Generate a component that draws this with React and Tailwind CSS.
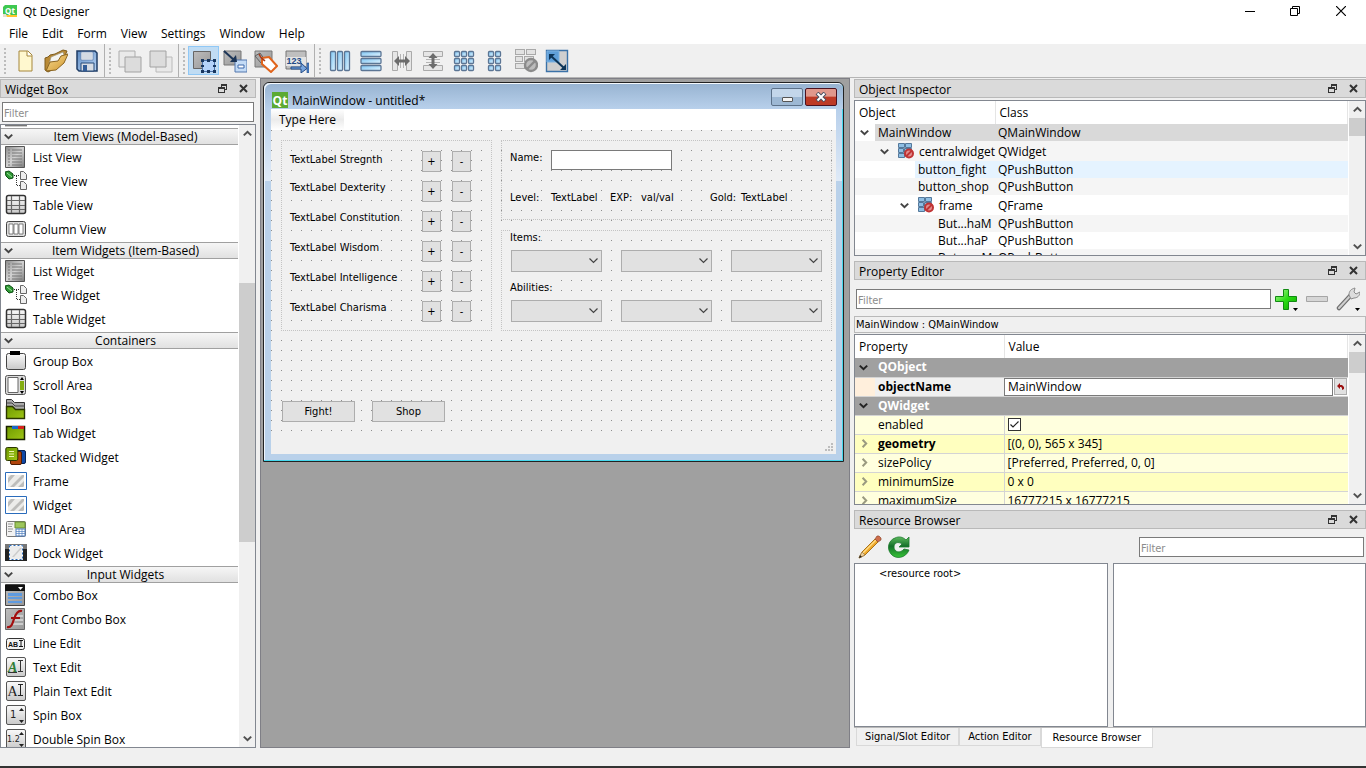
import { useState } from "react";

const ui = "font-['Open_Sans','Noto_Sans',sans-serif] text-[12px] leading-4";
const small = "font-['DejaVu_Sans_Condensed','DejaVu_Sans',sans-serif] text-[11px] leading-4";

/* ---------- small glyphs ---------- */

function Chevron({ dir = "down", color = "#505050", size = 9 }) {
  const turn = { down: 0, up: 180, right: -90 }[dir];
  return (
    <svg width={size} height={size} viewBox="0 0 9 9" className="shrink-0">
      <path d="M.8 2.6 4.5 6.2 8.2 2.6" transform={`rotate(${turn} 4.5 4.5)`} fill="none" stroke={color} strokeWidth="2" />
    </svg>
  );
}

function RestoreGlyph() {
  return (
    <svg width="9" height="9" viewBox="0 0 9 9" shapeRendering="crispEdges">
      <path d="M3 0h6v6H7V5h1V2H4v1H3zM0 3h7v6H0zM1 5v3h5V5z" fill="#333" fillRule="evenodd" />
    </svg>
  );
}

function CloseGlyph() {
  return (
    <svg width="9" height="9" viewBox="0 0 9 9">
      <path d="M1 1l7 7M8 1 1 8" stroke="#333" strokeWidth="2" />
    </svg>
  );
}

function DropMark() {
  return (
    <svg width="5" height="3" viewBox="0 0 5 3" className="absolute right-0 bottom-0">
      <path d="M0 0h5L2.500 3z" fill="#000" />
    </svg>
  );
}

function Gradients() {
  return (
    <svg width="0" height="0" className="absolute" aria-hidden="true">
      <defs>
        <linearGradient id="metal" x1="0" y1="0" x2="1" y2="1">
          <stop offset="0" stopColor="#8a8a8a" />
          <stop offset=".5" stopColor="#d2d2d2" />
          <stop offset="1" stopColor="#7c7c7c" />
        </linearGradient>
        <linearGradient id="plate" x1="0" y1="0" x2="0" y2="1">
          <stop offset="0" stopColor="#fafafa" />
          <stop offset="1" stopColor="#c9c9c9" />
        </linearGradient>
        <linearGradient id="steel" x1="0" y1="0" x2="1" y2="1">
          <stop offset="0" stopColor="#bdbdbd" />
          <stop offset="1" stopColor="#989898" />
        </linearGradient>
        <linearGradient id="sky" x1="0" y1="0" x2="1" y2="1">
          <stop offset="0" stopColor="#7cc4f2" />
          <stop offset="1" stopColor="#e2f4ff" />
        </linearGradient>
        <linearGradient id="lime" x1="0" y1="0" x2="1" y2="1">
          <stop offset="0" stopColor="#6f9a00" />
          <stop offset="1" stopColor="#9fc515" />
        </linearGradient>
        <linearGradient id="gold" x1="0" y1="0" x2="1" y2="1">
          <stop offset="0" stopColor="#f8dc94" />
          <stop offset="1" stopColor="#cf952b" />
        </linearGradient>
        <linearGradient id="leaf" x1="0" y1="0" x2="0" y2="1">
          <stop offset="0" stopColor="#5cb85c" />
          <stop offset=".45" stopColor="#15702a" />
          <stop offset="1" stopColor="#37c437" />
        </linearGradient>
        <linearGradient id="green" x1="0" y1="0" x2="1" y2="1">
          <stop offset="0" stopColor="#b6f7a0" />
          <stop offset=".5" stopColor="#2bdc14" />
          <stop offset="1" stopColor="#0da800" />
        </linearGradient>
        <linearGradient id="navy" x1="0" y1="0" x2="1" y2="1">
          <stop offset="0" stopColor="#5f8dc4" />
          <stop offset="1" stopColor="#b9d4f4" />
        </linearGradient>
      </defs>
    </svg>
  );
}

function QtLogo({ size = 16 }) {
  return (
    <svg width={size} height={size} viewBox="0 0 16 16">
      <path d="M0 0h16v16H0z" fill="#5caa33" />
      <text x="8" y="12.500" textAnchor="middle" fontSize="12" fontWeight="700" fill="#fff" fontFamily="Open Sans, sans-serif">Qt</text>
    </svg>
  );
}

function AppLogo() {
  return (
    <svg width="14" height="13" viewBox="0 0 14 13">
      <path d="M2 0h12v10l-2 2H0V2z" fill="#3fc850" />
      <text x="7" y="8.500" textAnchor="middle" fontSize="8" fontWeight="700" fill="#fff" fontFamily="Open Sans, sans-serif">Qt</text>
      <path d="M2 10h12v2H2z" fill="#ffc52e" />
      <path d="M0 9h3l1 3H0z" fill="#e8e0cc" />
    </svg>
  );
}

/* ---------- toolbar icons, drawn on a 24px box ---------- */

function Icon24({ children }) {
  return (
    <svg width="24" height="24" viewBox="0 0 24 24">
      {children}
    </svg>
  );
}

const toolIcons = {
  new: (
    <Icon24>
      <path d="M6 2h9l4 4v16H6z" fill="#fff8cf" stroke="#a5863a" />
      <path d="M14 2v5h5" fill="#fff" stroke="#a5863a" />
    </Icon24>
  ),
  open: (
    <Icon24>
      <path d="M1 21V9l3-1 2-2 5-1 8-4 4 1-3 7-6 9-10 5z" fill="#b98a35" stroke="#7e5c1e" />
      <path d="m4 19 3-11 12-5 1 3-4 6z" fill="#f4f4f0" stroke="#999178" strokeWidth=".7" />
      <path d="m2 22 4-9 8-1 3-5 7-2-4 9-8 7z" fill="url(#gold)" stroke="#8b6521" />
    </Icon24>
  ),
  save: (
    <Icon24>
      <path d="M2 2h18l2 2v18H4l-2-2z" fill="url(#navy)" stroke="#1f3d66" strokeWidth="1.500" />
      <path d="M6 3h12v8H6z" fill="#f4f7fb" stroke="#5b7aa5" strokeWidth=".7" />
      <path d="M7 5h10M7 7h10M7 9h10" stroke="#b3bdca" />
      <path d="M6 14h13v8H6z" fill="#d8dde4" stroke="#274a78" />
      <path d="M8 16h4v6H8z" fill="#335d97" />
    </Icon24>
  ),
  back: (
    <Icon24>
      <path d="M1 2h16v16H1z" fill="#e9e9e9" stroke="#adadad" />
      <path d="M7 8h16v15H7z" fill="#dcdcdc" stroke="#a2a2a2" />
    </Icon24>
  ),
  front: (
    <Icon24>
      <path d="M7 8h16v15H7z" fill="#e9e9e9" stroke="#bababa" />
      <path d="M1 2h16v16H1z" fill="#dcdcdc" stroke="#a2a2a2" />
    </Icon24>
  ),
  widgets: (
    <Icon24>
      <path d="M1.500 2.500h17v17h-17z" fill="url(#steel)" stroke="#666" />
      <path d="M10.500 11.500h12v11h-12z" fill="#b4d3fa" stroke="#4c72a8" />
      <path d="M9 10h3v3H9zM15 10h3v3h-3zM21 10h3v3h-3zM9 16h3v2H9zM21 16h3v2h-3zM9 21h3v3H9zM15 21h3v3h-3zM21 21h3v3h-3z" fill="#17365f" />
    </Icon24>
  ),
  signals: (
    <Icon24>
      <path d="M1 2h17v14H1z" fill="url(#steel)" stroke="#777" />
      <path d="M12 11h12v12H12z" fill="#c3dbf6" stroke="#5277ad" />
      <path d="M15 16h6v3h-6z" fill="#fff" stroke="#3d68aa" />
      <path d="m1 2 10 9" stroke="#1c3557" strokeWidth="2" />
      <path d="M14 13H7l6-7z" fill="#1c3557" />
    </Icon24>
  ),
  buddies: (
    <Icon24>
      <path d="M1 2h17v16H1z" fill="url(#steel)" stroke="#777" />
      <path d="m1 7 5-3 5 7-4 3z" fill="#a8a8a8" stroke="#606060" />
      <path d="m8 9 7-1 8 9-6 6-9-8z" fill="#fff" stroke="#e0641c" strokeWidth="2" />
      <path d="M5 5c2 5 4 5 6 7" fill="none" stroke="#a63a1b" strokeWidth="1.500" />
    </Icon24>
  ),
  taborder: (
    <Icon24>
      <path d="M1 2h20v18H1z" fill="#bfbfbf" stroke="#777" />
      <path d="M1 8h20v9H1z" fill="#e4e4e4" />
      <text x="1.500" y="15" fontSize="9" fontWeight="700" fill="#234a86" fontFamily="Liberation Sans, sans-serif">123</text>
      <path d="M6 18h10v-4l6 5.500-6 4.500v-4H6z" fill="#77a5dd" stroke="#234a86" />
      <path d="M22 14h2v10h-2z" fill="#4d82c6" stroke="#234a86" strokeWidth=".6" />
    </Icon24>
  ),
  hlayout: (
    <Icon24>
      {[2, 9, 16].map((x) => (
        <rect key={x} x={x + 0.5} y="2.500" width="5" height="19" rx="1" fill="url(#sky)" stroke="#5b7594" strokeWidth="1.300" />
      ))}
    </Icon24>
  ),
  vlayout: (
    <Icon24>
      {[2, 9, 16].map((y) => (
        <rect key={y} x="2" y={y + 0.5} width="20" height="5" rx="1" fill="url(#sky)" stroke="#5b7594" strokeWidth="1.300" />
      ))}
    </Icon24>
  ),
  hsplit: (
    <Icon24>
      <path d="M2.500 2.500h5v19h-5zM16.500 2.500h5v19h-5z" fill="#e6e6e6" stroke="#aaa" />
      <path d="M10.500 5v14M13.500 5v14" stroke="#b4b4b4" />
      <path d="m4 12 5-5v3.500h6V7l5 5-5 5v-3.500H9V17z" fill="#6c6c6c" />
    </Icon24>
  ),
  vsplit: (
    <Icon24>
      <path d="M2.500 2.500h19v5h-19zM2.500 16.500h19v5h-19z" fill="#e6e6e6" stroke="#aaa" />
      <path d="M5 10.500h14M5 13.500h14" stroke="#b4b4b4" />
      <path d="m12 4 4.500 5h-3v6h3L12 20l-4.500-5h3V9h-3z" fill="#6c6c6c" />
    </Icon24>
  ),
  grid: (
    <Icon24>
      {[2, 9, 16].map((y) =>
        [2, 9, 16].map((x) => (
          <rect key={`${x}-${y}`} x={x + 0.5} y={y + 0.5} width="5" height="5" rx="1" fill="url(#sky)" stroke="#5b7594" strokeWidth="1.300" />
        ))
      )}
    </Icon24>
  ),
  form: (
    <Icon24>
      {[2, 9, 16].map((y) =>
        [5, 12].map((x) => (
          <rect key={`${x}-${y}`} x={x + 0.5} y={y + 0.5} width="5" height="5" rx="1" fill="url(#sky)" stroke="#5b7594" strokeWidth="1.300" />
        ))
      )}
    </Icon24>
  ),
  breaklayout: (
    <Icon24>
      {[0, 7, 14].map((y, i) => (
        <g key={y} fill="#e2e2e2" stroke="#a9a9a9">
          <rect x="1.500" y={y + 0.5} width={i === 1 ? 7 : 9} height="5" />
          <rect x={i === 1 ? 10.5 : 12.5} y={y + 0.5} width="9" height="5" />
        </g>
      ))}
      <circle cx="17" cy="16" r="6" fill="#bdbdbd" stroke="#8b8b8b" strokeWidth="2.400" />
      <path d="m13 20 8-8" stroke="#8b8b8b" strokeWidth="2.400" />
    </Icon24>
  ),
  adjust: (
    <Icon24>
      <path d="M1.500 1.500h21v21h-21z" fill="#cfcfcf" stroke="#3b72a8" strokeWidth="1.400" />
      <path d="M2 2h12v11H2z" fill="#5f9fd9" stroke="#7eb3e2" />
      <path d="m6 7 13 12" stroke="#0d3558" strokeWidth="2" />
      <path d="M4 5h6l-6 6zM21 21h-6l6-6z" fill="#0d3558" />
    </Icon24>
  ),
};

const toolGroups = [
  [["new", "New"], ["open", "Open"], ["save", "Save"]],
  [["back", "Send to Back"], ["front", "Bring to Front"]],
  [["widgets", "Edit Widgets"], ["signals", "Edit Signals/Slots"], ["buddies", "Edit Buddies"], ["taborder", "Edit Tab Order"]],
  [
    ["hlayout", "Lay Out Horizontally"],
    ["vlayout", "Lay Out Vertically"],
    ["hsplit", "Lay Out Horizontally in Splitter"],
    ["vsplit", "Lay Out Vertically in Splitter"],
    ["grid", "Lay Out in a Grid"],
    ["form", "Lay Out in a Form Layout"],
    ["breaklayout", "Break Layout"],
    ["adjust", "Adjust Size"],
  ],
];

/* ---------- widget box icons, drawn on a 22px box ---------- */

function Icon22({ children }) {
  return (
    <svg width="22" height="22" viewBox="0 0 22 22" className="shrink-0">
      {children}
    </svg>
  );
}

const editPlate = <rect x="1.500" y="1.500" width="19" height="19" rx="1.500" fill="url(#plate)" stroke="#555" />;
const stripes = (
  <>
    <path d="M.5 2.500h21v17H.5z" fill="#fff" stroke="#2a6cbc" />
    <path d="M3 5h16v12H3z" fill="#ececea" />
    <path d="M3 13v-5l3-3h4zM5 17 17 5h2v2L9 17zM13 17l6-6v5l-1 1z" fill="#bdbdbb" />
  </>
);

const widgetIcons = {
  list: (
    <Icon22>
      <path d="M.5.5h19v21H.5z" fill="url(#metal)" stroke="#555" />
      <path d="M3 4h2M7 4h10M3 7h2M7 7h10M3 10h2M7 10h10M3 13h2M7 13h10M3 16h2M7 16h10M3 19h2M7 19h10" stroke="#777" />
    </Icon22>
  ),
  tree: (
    <Icon22>
      <path d="M0 2l4-1 4 3v4l-4 1-3-3z" fill="#2f9a35" stroke="#0c4d12" />
      <path d="m2 3 5 4" stroke="#9be29b" />
      <path d="M9 5.500h6M11.500 6v10M12 15.500h4" stroke="#333" strokeDasharray="1 1" fill="none" />
      <path d="M15.500 1.500h3l3 3v5h-6zM15.500 11.500h3l3 3v5h-6z" fill="#eee" stroke="#666" />
    </Icon22>
  ),
  table: (
    <Icon22>
      <rect x="1.500" y="1.500" width="19" height="18" rx="2" fill="url(#plate)" stroke="#333" strokeWidth="1.500" />
      <path d="M2 6.500h18M2 11.500h18M2 15.500h18M6.500 2v17M14.500 2v17" stroke="#666" strokeWidth="1.200" />
    </Icon22>
  ),
  column: (
    <Icon22>
      <rect x="1.500" y="3.500" width="19" height="15" rx="2" fill="#ddd" stroke="#444" />
      <path d="M4 6h4v10H4zM9 6h4v10H9zM14 6h4v10h-4z" fill="#fff" stroke="#666" strokeWidth=".8" />
    </Icon22>
  ),
  group: (
    <Icon22>
      <rect x="1.500" y="3.500" width="19" height="16" rx="2" fill="url(#plate)" stroke="#444" />
      <path d="M5 1h10v4H5z" fill="#000" />
    </Icon22>
  ),
  scroll: (
    <Icon22>
      <rect x=".5" y="1.500" width="20" height="19" rx="2" fill="#ddd" stroke="#555" />
      <path d="M3 3.500h10v15H3z" fill="#fff" stroke="#666" />
      <path d="M15 7h4v9h-4z" fill="#84ad10" />
      <path d="m15 6 2-3 2 3zM15 17h4l-2 3z" fill="#000" />
    </Icon22>
  ),
  toolbox: (
    <Icon22>
      <path d="M1.500 1.500h5l3 3h10v16h-18z" fill="#aaa" stroke="#333" />
      <path d="M2 5h5l3 3h10" fill="none" stroke="#444" />
      <path d="M1.500 8.500h6l3 3h9v9h-18z" fill="url(#lime)" stroke="#2a3600" strokeWidth="1.400" />
    </Icon22>
  ),
  tab: (
    <Icon22>
      <path d="M1.500 4.500h18v13h-18z" fill="url(#lime)" stroke="#182000" strokeWidth="1.500" />
      <path d="M7 4h6v3H7z" fill="#1768c9" />
      <path d="M13 4h6v3h-6z" fill="#d5221d" />
    </Icon22>
  ),
  stacked: (
    <Icon22>
      <rect x="9.500" y="4.500" width="11" height="13" rx="1.500" fill="#1148a5" stroke="#082252" />
      <rect x="5.500" y="5.500" width="11" height="13" rx="1.500" fill="#b0440c" stroke="#501c02" />
      <rect x=".8" y="1.500" width="12" height="13" rx="1.500" fill="url(#lime)" stroke="#2a3600" />
      <path d="M4 5.500h5M4 8h5M4 10.500h5" stroke="#eef6b0" />
    </Icon22>
  ),
  frame: <Icon22>{stripes}</Icon22>,
  mdi: (
    <Icon22>
      <rect x="1.500" y="3.500" width="19" height="15" rx="1" fill="#f2f2f2" stroke="#777" />
      <path d="M3 6h5M3 8.500h4M3 11h5M3 13.500h4" stroke="#999" />
      <path d="M10 4h10v6H10z" fill="#9dc65c" stroke="#688f30" />
      <path d="M11 11h9v7h-9z" fill="#fff" stroke="#4f7fc0" />
      <path d="M11 13.500h9M11 15.500h9M14 11v7M17 11v7" stroke="#4f7fc0" strokeWidth=".7" />
    </Icon22>
  ),
  dock: (
    <Icon22>
      <path d="M0 2h22v17H0z" fill="#222" />
      <path d="M0 2h22v5H0z" fill="#777" />
      <path d="M4.500 3.500h13v14h-13z" fill="#ececec" stroke="#fff" />
      <path d="M4.500 3.500h13v14h-13z" fill="none" stroke="#2a6cbc" strokeDasharray="2 2" />
      <path d="m7 15 8-9h2L9 15z" fill="#ccc" />
    </Icon22>
  ),
  combo: (
    <Icon22>
      <path d="M.5.5h19v21H.5z" fill="url(#steel)" stroke="#444" />
      <path d="M0 1h20v6H0z" fill="#111" />
      <path d="M13 3h5l-2.500 3z" fill="#fff" />
      <path d="M3 9h14v3H3zM3 13h14v2H3zM3 17h14v2H3z" fill="#5f9be0" />
    </Icon22>
  ),
  fontcombo: (
    <Icon22>
      <path d="M.5.5h19v21H.5z" fill="url(#steel)" stroke="#666" />
      <path d="M8 8h10M8 12h10M8 16h10" stroke="#ccc" strokeWidth="2" />
      <path d="M2 19c4 1 5-2 7-8s4-9 8-8M6 10h9" fill="none" stroke="#a30f0f" strokeWidth="2.200" />
    </Icon22>
  ),
  line: (
    <Icon22>
      <rect x="1.500" y="6.500" width="18" height="11" rx="2" fill="#f2f2f2" stroke="#333" />
      <text x="3" y="14.500" fontSize="7" fontWeight="700" fill="#111" fontFamily="Liberation Sans, sans-serif">AB</text>
      <path d="M14 8.500h4M14 14.500h4M16 9v5" stroke="#111" />
    </Icon22>
  ),
  text: (
    <Icon22>
      {editPlate}
      <text x="3" y="16" fontSize="14" fontStyle="italic" fontWeight="700" fill="#2f7d36" fontFamily="Liberation Serif, serif">A</text>
      <path d="M3 16.500h9M13 4.500h5M13 15.500h5M15.500 5v10" stroke="#333" />
    </Icon22>
  ),
  plain: (
    <Icon22>
      {editPlate}
      <text x="2.500" y="16" fontSize="14" fill="#222" fontFamily="Liberation Serif, serif">A</text>
      <path d="M13 4.500h5M13 15.500h5M15.500 5v10" stroke="#222" />
    </Icon22>
  ),
  spin: (
    <Icon22>
      {editPlate}
      <text x="5" y="14" fontSize="10" fill="#222" fontFamily="DejaVu Sans, sans-serif">1</text>
      <path d="m14 7 2.500-3L19 7zM14 16h5l-2.500 3z" fill="#222" />
    </Icon22>
  ),
  dspin: (
    <Icon22>
      {editPlate}
      <text x="2" y="14" fontSize="8" fill="#222" fontFamily="DejaVu Sans, sans-serif">1.2</text>
      <path d="m14 7 2.500-3L19 7zM14 16h5l-2.500 3z" fill="#222" />
    </Icon22>
  ),
};

const categories = [
  {
    title: "Item Views (Model-Based)",
    items: [["list", "List View"], ["tree", "Tree View"], ["table", "Table View"], ["column", "Column View"]],
  },
  {
    title: "Item Widgets (Item-Based)",
    items: [["list", "List Widget"], ["tree", "Tree Widget"], ["table", "Table Widget"]],
  },
  {
    title: "Containers",
    items: [
      ["group", "Group Box"],
      ["scroll", "Scroll Area"],
      ["toolbox", "Tool Box"],
      ["tab", "Tab Widget"],
      ["stacked", "Stacked Widget"],
      ["frame", "Frame"],
      ["frame", "Widget"],
      ["mdi", "MDI Area"],
      ["dock", "Dock Widget"],
    ],
  },
  {
    title: "Input Widgets",
    items: [
      ["combo", "Combo Box"],
      ["fontcombo", "Font Combo Box"],
      ["line", "Line Edit"],
      ["text", "Text Edit"],
      ["plain", "Plain Text Edit"],
      ["spin", "Spin Box"],
      ["dspin", "Double Spin Box"],
    ],
  },
];

/* ---------- shared parts ---------- */

function DockTitle({ children }) {
  return (
    <div className="flex h-[19px] shrink-0 items-center border border-[#b9b9b9] bg-[#dadada] pl-1 pr-[7px]">
      <h2 className="flex-1 pt-[2px]">{children}</h2>
      <button type="button" aria-label="Float" className="mr-3">
        <RestoreGlyph />
      </button>
      <button type="button" aria-label="Close">
        <CloseGlyph />
      </button>
    </div>
  );
}

function ScrollBar({ before, thumb }) {
  return (
    <div className="flex w-[17px] shrink-0 flex-col items-center border-l border-white bg-[#f0f0f0]">
      <button type="button" aria-label="Scroll up" className="flex h-[17px] w-full shrink-0 items-center justify-center">
        <Chevron dir="up" />
      </button>
      <div className="flex min-h-0 w-full flex-1 flex-col">
        <div className={before} />
        <div className={`w-full bg-[#cdcdcd] ${thumb}`} />
      </div>
      <button type="button" aria-label="Scroll down" className="flex h-[17px] w-full shrink-0 items-center justify-center">
        <Chevron />
      </button>
    </div>
  );
}

function FilterInput({ label, className }) {
  return (
    <input
      type="text"
      aria-label={label}
      placeholder="Filter"
      className={`h-5 min-w-0 border border-[#7a7a7a] bg-white px-px pt-[2px] outline-none placeholder:text-[#8c8c8c] ${small} ${className}`}
    />
  );
}

/* ---------- top bars ---------- */

function TitleBar() {
  return (
    <header className="flex h-[22px] shrink-0 items-center bg-white pl-[3px] pr-[2px]">
      <AppLogo />
      <h1 className="ml-[6px] flex-1 pt-[2px]">Qt Designer</h1>
      <button type="button" aria-label="Minimize" className="flex w-[45px] justify-center">
        <svg width="10" height="10" viewBox="0 0 10 10"><path d="M0 5.500h10" stroke="#000" /></svg>
      </button>
      <button type="button" aria-label="Restore" className="flex w-[45px] justify-center">
        <svg width="10" height="10" viewBox="0 0 10 10"><path d="M.5 2.500h7v7h-7zM2.500 2V.5h7v7H8" fill="none" stroke="#000" /></svg>
      </button>
      <button type="button" aria-label="Close" className="flex w-[47px] justify-center">
        <svg width="10" height="10" viewBox="0 0 10 10"><path d="m0 0 10 10M10 0 0 10" stroke="#000" strokeWidth="1.200" /></svg>
      </button>
    </header>
  );
}

function MenuBar() {
  return (
    <nav className="flex h-[22px] shrink-0 items-center bg-white pl-[2px] pt-[2px]">
      {["File", "Edit", "Form", "View", "Settings", "Window", "Help"].map((name) => (
        <button key={name} type="button" className="px-[7px]">{name}</button>
      ))}
    </nav>
  );
}

function ToolBar() {
  const [mode, setMode] = useState("widgets");
  return (
    <div className="flex h-[34px] shrink-0 border-b border-[#b5b5b5] bg-[#f0f0f0]">
      {toolGroups.map((group, i) => (
        <div key={i} className={`flex items-center ${i < 3 ? "border-r border-[#b0b0b0] pr-[2px]" : ""}`}>
          <div className="flex w-[9px] flex-col items-center gap-[2px]">
            {[0, 1, 2, 3, 4, 5, 6].map((n) => (
              <span key={n} className="size-[2px] bg-[#bcbcbc]" />
            ))}
          </div>
          {group.map(([id, label]) => (
            <button
              key={id}
              type="button"
              title={label}
              onClick={() => i === 2 && setMode(id)}
              className={`flex h-[29px] w-[31px] items-center justify-center border ${
                id === mode ? "border-[#90c8f6] bg-[#c0dcf3]" : "border-transparent"
              }`}
            >
              {toolIcons[id]}
            </button>
          ))}
        </div>
      ))}
    </div>
  );
}

/* ---------- left dock ---------- */

function WidgetBox() {
  return (
    <aside className="flex w-[256px] shrink-0 flex-col pt-px">
      <DockTitle>Widget Box</DockTitle>
      <FilterInput label="Filter widgets" className="mx-[2px] mt-1" />
      <div className="mt-[2px] flex min-h-0 flex-1 border border-[#828790] bg-white">
        <div className="min-w-0 flex-1 overflow-hidden">
          <div className="ml-1 h-[2px] w-[22px] border-b border-[#ccc] bg-[#777]" />
          {categories.map((category) => (
            <section key={category.title} className="pt-px">
              <h3 className="flex h-[17px] items-center border-y border-[#a0a0a0] bg-gradient-to-b from-[#f6f6f6] to-[#e1e1e1] pl-[3px]">
                <Chevron color="#444" />
                <span className="flex-1 pt-px text-center">{category.title}</span>
              </h3>
              <ul>
                {category.items.map(([icon, name]) => (
                  <li key={name} className="flex h-6 items-center gap-[6px] pl-1">
                    {widgetIcons[icon]}
                    <span className="pt-[2px]">{name}</span>
                  </li>
                ))}
              </ul>
            </section>
          ))}
        </div>
        <ScrollBar before="basis-[24%]" thumb="basis-[44%]" />
      </div>
    </aside>
  );
}

/* ---------- form under edit ---------- */

const stats = [
  ["TextLabel Stregnth", 29],
  ["TextLabel Dexterity", 57],
  ["TextLabel Constitution", 87],
  ["TextLabel Wisdom", 117],
  ["TextLabel Intelligence", 147],
  ["TextLabel Charisma", 177],
];

const formLabels = [
  ["Level:", 239, 67],
  ["TextLabel", 280, 67],
  ["EXP:", 339, 67],
  ["val/val", 370, 67],
  ["Gold:", 439, 67],
  ["TextLabel", 470, 67],
  ["Items:", 239, 107],
  ["Abilities:", 239, 157],
];

// frames of the form as x, y, width, height
const frames = [
  [10, 10, 211, 191],
  [230, 10, 331, 80],
  [230, 100, 331, 101],
];

function at(x, y, width, height) {
  return { left: x, top: y, width, height };
}

function FormCanvas() {
  return (
    <div className={`relative min-h-0 flex-1 bg-[#f0f0f0] bg-[conic-gradient(at_1px_1px,transparent_270deg,#8e8e8e_0)] bg-[length:10px_10px] bg-repeat ${small}`}>
      {frames.map(([x, y, w, h]) => (
        <div key={`${x}-${y}`} style={at(x, y, w, h)} className="absolute border border-dotted border-[#c3c3c3]" />
      ))}

      {stats.map(([name, y], i) => (
        <div key={name}>
          <span style={at(19, y - 7)} className="absolute whitespace-nowrap bg-[#f0f0f0]">{name}</span>
          <button type="button" style={at(151, 21 + i * 30, 19, 21)} className="absolute border border-[#adadad] bg-[#e1e1e1] text-center">+</button>
          <button type="button" style={at(181, 21 + i * 30, 19, 21)} className="absolute border border-[#adadad] bg-[#e1e1e1] text-center">-</button>
        </div>
      ))}

      <label htmlFor="hero-name" style={at(239, 20)} className="absolute bg-[#f0f0f0]">Name:</label>
      <input id="hero-name" type="text" style={at(280, 20, 121, 20)} className="absolute border border-[#7a7a7a] bg-white px-1 outline-none" />
      {formLabels.map(([text, x, y]) => (
        <span key={`${x}-${y}`} style={at(x, y - 7)} className="absolute whitespace-nowrap bg-[#f0f0f0]">{text}</span>
      ))}

      {[["Item", 120], ["Ability", 170]].map(([kind, y]) =>
        [240, 350, 460].map((x, i) => (
          <div key={`${x}-${y}`} style={at(x, y, 91, 22)} className="absolute flex items-center justify-end">
            <select aria-label={`${kind} ${i + 1}`} className="absolute inset-0 appearance-none border border-[#adadad] bg-[#e1e1e1]" />
            <svg width="9" height="6" viewBox="0 0 9 6" className="pointer-events-none relative mr-1">
              <path d="M.5.5 4.500 4.500 8.500.5" fill="none" stroke="#444" strokeWidth="1.200" />
            </svg>
          </div>
        ))
      )}

      <button type="button" style={at(11, 271, 73, 21)} className="absolute border border-[#adadad] bg-[#e1e1e1]">Fight!</button>
      <button type="button" style={at(101, 271, 73, 21)} className="absolute border border-[#adadad] bg-[#e1e1e1]">Shop</button>
    </div>
  );
}

function FormWindow() {
  return (
    <div className="absolute left-[2px] top-[3px] flex h-[380px] w-[581px] flex-col rounded-t-md border border-[#222] bg-[linear-gradient(#b8d0eb_26px,#dfeaf7_98px,#b9d1ea_98px)] shadow-[inset_-1px_-1px_0_#46d8ee,inset_1px_1px_0_#eef5fc]">
      <div className="flex h-[26px] shrink-0 items-center rounded-t-md bg-gradient-to-b from-[#97b3d1] to-[#b8d0eb] pl-2 pr-[6px] pt-[2px] shadow-[inset_1px_1px_0_#f4f9fd]">
        <div className="flex flex-1 items-center gap-1 pt-[6px]">
          <QtLogo />
          <h2 className="pt-px">MainWindow - untitled*</h2>
        </div>
        <button type="button" aria-label="Minimize" className="mr-[2px] flex h-[18px] w-8 items-center justify-center rounded-[2px] border border-[#5c7189] bg-gradient-to-b from-[#c3d6ea] from-50% to-[#9db8d4] to-50%">
          <span className="mt-1 h-[5px] w-[11px] rounded-[1px] border border-[#555] bg-[#f4f4f4]" />
        </button>
        <button type="button" aria-label="Close" className="flex h-[18px] w-8 items-center justify-center rounded-[2px] border border-[#4b1220] bg-gradient-to-b from-[#e0988c] from-45% to-[#bd3a26] to-50%">
          <svg width="12" height="10" viewBox="0 0 12 10">
            <path d="m2 1 8 8M10 1 2 9" stroke="#4a4f60" strokeWidth="4" />
            <path d="m2.500 1.500 7 7M9.500 1.500l-7 7" stroke="#fff" strokeWidth="2" />
          </svg>
        </button>
      </div>
      <div className="mx-[7px] mb-[7px] flex min-h-0 flex-1 flex-col">
        <div className="flex h-[21px] shrink-0 bg-white">
          <button type="button" className="bg-gradient-to-b from-white via-[#ebebeb] to-white px-2">Type Here</button>
        </div>
        <div className="relative flex min-h-0 flex-1 flex-col bg-[#f0f0f0]">
          <FormCanvas />
          <div className="flex h-[22px] items-end justify-end bg-[#f0f0f0] p-[2px]">
            <svg width="9" height="9" viewBox="0 0 9 9">
              <path d="M6 0h2v2H6zM3 3h2v2H3zM6 3h2v2H6zM0 6h2v2H0zM3 6h2v2H3zM6 6h2v2H6z" fill="#bdbdbd" />
            </svg>
          </div>
        </div>
      </div>
    </div>
  );
}

/* ---------- right docks ---------- */

function BrokenLayoutIcon() {
  return (
    <svg width="16" height="16" viewBox="0 0 16 16" className="shrink-0">
      <path d="M.5.5h6v4h-6zM7.500.5h6v4h-6zM.5 5.500h5v4h-5zM6.500 5.500h7v4h-7zM.5 10.500h6v4h-6z" fill="#8fbfe4" stroke="#54789b" />
      <circle cx="11" cy="10.500" r="4" fill="#e08d8d" stroke="#c03434" strokeWidth="2" />
      <path d="m8 13.500 6-6" stroke="#c03434" strokeWidth="1.800" />
    </svg>
  );
}

const objects = [
  { name: "MainWindow", type: "QMainWindow", indent: "w-5", open: true, row: "h-[17px]", fill: "bg-[#d9d9d9]", rest: "bg-[#d9d9d9]" },
  { name: "centralwidget", type: "QWidget", indent: "w-10", open: true, icon: true, row: "h-5 bg-[#f5f5f5]" },
  { name: "button_fight", type: "QPushButton", indent: "w-15", row: "h-[17px]", fill: "bg-[#e5f3ff]", rest: "bg-[#e5f3ff]" },
  { name: "button_shop", type: "QPushButton", indent: "w-15", row: "h-[17px] bg-[#f5f5f5]" },
  { name: "frame", type: "QFrame", indent: "w-15", open: true, icon: true, row: "h-5" },
  { name: "But...haM", type: "QPushButton", indent: "w-20", row: "h-[17px] bg-[#f5f5f5]" },
  { name: "But...haP", type: "QPushButton", indent: "w-20", row: "h-[17px]" },
  { name: "But...onM", type: "QPushButton", indent: "w-20", row: "h-[17px] bg-[#f5f5f5]" },
];

function ObjectInspector() {
  return (
    <section className="flex h-[177px] shrink-0 flex-col">
      <DockTitle>Object Inspector</DockTitle>
      <div className="mt-[2px] flex min-h-0 flex-1 border border-[#828790] bg-white">
        <div className="min-w-0 flex-1 overflow-hidden">
          <table className="w-full table-fixed border-collapse">
            <thead>
              <tr className="h-[23px] text-left">
                <th className="w-[140px] border-r border-[#e5e5e5] p-0 pl-1 font-normal">Object</th>
                <th className="border-r border-[#e5e5e5] p-0 pl-1 font-normal">Class</th>
              </tr>
            </thead>
            <tbody>
              {objects.map((item) => (
                <tr key={item.name} className={item.row}>
                  <td className="p-0">
                    <div className="flex items-center">
                      <span className={`flex shrink-0 justify-end pr-[6px] ${item.indent}`}>{item.open ? <Chevron color="#444" /> : null}</span>
                      <span className={`flex flex-1 items-center gap-[5px] pl-[3px] whitespace-nowrap ${item.fill ?? ""}`}>
                        {item.icon ? <BrokenLayoutIcon /> : null}
                        <span className="pt-px">{item.name}</span>
                      </span>
                    </div>
                  </td>
                  <td className={`p-0 pl-[3px] pt-px ${item.rest ?? ""}`}>{item.type}</td>
                </tr>
              ))}
            </tbody>
          </table>
        </div>
        <ScrollBar before="" thumb="h-[18px]" />
      </div>
    </section>
  );
}

const properties = [
  { name: "geometry", value: "[(0, 0), 565 x 345]", bold: true, tone: "bg-[#ffffbf]" },
  { name: "sizePolicy", value: "[Preferred, Preferred, 0, 0]", tone: "bg-[#ffffde]" },
  { name: "minimumSize", value: "0 x 0", tone: "bg-[#ffffbf]" },
  { name: "maximumSize", value: "16777215 x 16777215", tone: "bg-[#ffffde]" },
];

function PropertyGroup({ name }) {
  return (
    <tr className="h-[19px] border-b border-[#d4d4d4] bg-[#a0a0a0]">
      <th colSpan={2} className="p-0 text-left font-bold text-white">
        <div className="flex items-center gap-[10px] pl-1">
          <Chevron color="#222" />
          <span>{name}</span>
        </div>
      </th>
    </tr>
  );
}

function PropertyEditor() {
  const [objectName, setObjectName] = useState("MainWindow");
  const [enabled, setEnabled] = useState(true);

  return (
    <section className="mt-[5px] flex h-[244px] shrink-0 flex-col">
      <DockTitle>Property Editor</DockTitle>
      <div className="flex h-9 shrink-0 items-center gap-1 pl-[2px] pr-[6px] pt-[2px]">
        <FilterInput label="Filter properties" className="flex-1" />
        <button type="button" aria-label="Add dynamic property" className="relative">
          <svg width="23" height="23" viewBox="0 0 23 23">
            <path d="M8.500 1.500h5v7h8v5h-8v8h-5v-8h-8v-5h8z" fill="url(#green)" stroke="#118a12" />
          </svg>
          <DropMark />
        </button>
        <button type="button" aria-label="Remove dynamic property" className="mx-1">
          <svg width="22" height="8" viewBox="0 0 22 8">
            <path d="M.5 1.500h21v5H.5z" fill="#d6d6d6" stroke="#a5a5a5" />
          </svg>
        </button>
        <button type="button" aria-label="Configure property editor" className="relative">
          <svg width="24" height="24" viewBox="0 0 24 24">
            <path d="m3 21 12-13" stroke="#6f6f6f" strokeWidth="4.500" strokeLinecap="round" />
            <path d="m3 21 12-13" stroke="#cfcfcf" strokeWidth="2" strokeLinecap="round" />
            <path d="M13 8c0-4 2-6 6-7l-1 4 2 2 4-2c0 4-3 6-6 6l-3 1z" fill="#dcdcdc" stroke="#8a8a8a" />
          </svg>
          <DropMark />
        </button>
      </div>
      <p className={`h-[17px] shrink-0 border border-[#b9b9b9] px-px ${small}`}>MainWindow : QMainWindow</p>
      <div className="mt-px flex min-h-0 flex-1 border border-[#828790] bg-white">
        <div className="min-w-0 flex-1 overflow-hidden">
          <table className="w-full table-fixed border-collapse">
            <thead>
              <tr className="h-[23px] text-left">
                <th className="w-[149px] border-r border-[#e5e5e5] p-0 pl-1 font-normal">Property</th>
                <th className="border-r border-[#e5e5e5] p-0 pl-1 font-normal">Value</th>
              </tr>
            </thead>
            <tbody>
              <PropertyGroup name="QObject" />
              <tr className="h-[19px] border-b border-[#d4d4d4]">
                <td className="bg-[#f0f0f0] p-0">
                  <label htmlFor="object-name" className="flex h-[18px] font-bold">
                    <span className="mr-[3px] w-5 bg-[#ffefdc]" />
                    <span className="pt-px">objectName</span>
                  </label>
                </td>
                <td className="p-0">
                  <div className="flex gap-px pr-px">
                    <input
                      id="object-name"
                      type="text"
                      value={objectName}
                      onChange={(event) => setObjectName(event.target.value)}
                      className="h-[18px] min-w-0 flex-1 border border-[#7a7a7a] bg-white px-[3px] outline-none"
                    />
                    <button
                      type="button"
                      aria-label="Reset objectName"
                      onClick={() => setObjectName("MainWindow")}
                      className="flex h-[17px] w-[13px] items-center justify-center border border-[#adadad] bg-[#e1e1e1]"
                    >
                      <svg width="7" height="7" viewBox="0 0 7 7"><path d="M0 3l3-3v2h2l2 2v2L5 7V5L4 4H3v2z" fill="#9c1010" /></svg>
                    </button>
                  </div>
                </td>
              </tr>
              <PropertyGroup name="QWidget" />
              <tr className="h-[19px] border-b border-[#d4d4d4] bg-[#ffffde]">
                <td className="border-r border-[#d4d4d4] p-0 pl-[23px]">
                  <label htmlFor="enabled">enabled</label>
                </td>
                <td className="p-0 pl-[3px]">
                  <div className="relative size-[13px]">
                    <input
                      id="enabled"
                      type="checkbox"
                      checked={enabled}
                      onChange={(event) => setEnabled(event.target.checked)}
                      className="block size-[13px] appearance-none border border-[#333] bg-white"
                    />
                    {enabled ? (
                      <svg width="13" height="13" viewBox="0 0 13 13" className="pointer-events-none absolute inset-0">
                        <path d="M2.500 6.500 5 9l5.500-5.500" fill="none" stroke="#222" strokeWidth="1.200" />
                      </svg>
                    ) : null}
                  </div>
                </td>
              </tr>
              {properties.map((item) => (
                <tr key={item.name} className={`h-[19px] border-b border-[#d4d4d4] ${item.tone}`}>
                  <td className="border-r border-[#d4d4d4] p-0">
                    <div className={`flex items-center gap-[9px] pl-[5px] ${item.bold ? "font-bold" : ""}`}>
                      <Chevron dir="right" color="#9a9a80" />
                      {item.name}
                    </div>
                  </td>
                  <td className="p-0 pl-[3px]">{item.value}</td>
                </tr>
              ))}
            </tbody>
          </table>
        </div>
        <ScrollBar before="" thumb="h-[21px]" />
      </div>
    </section>
  );
}

function ResourceBrowser() {
  const [tab, setTab] = useState("Resource Browser");
  return (
    <section className="mt-[5px] flex min-h-0 flex-1 flex-col">
      <DockTitle>Resource Browser</DockTitle>
      <div className="flex h-[34px] shrink-0 items-center gap-[6px] pl-1 pr-[2px] pt-[2px]">
        <button type="button" aria-label="Edit resources">
          <svg width="24" height="24" viewBox="0 0 24 24">
            <path d="m1 23 3-6L17 4l3 3L7 20z" fill="#efa92a" stroke="#a9731a" />
            <path d="m5 18 13-13" stroke="#ffdc85" strokeWidth="1.500" />
            <path d="m1 23 3-6 3 3z" fill="#ecd0a0" stroke="#9b7a48" strokeWidth=".7" />
            <path d="m1 23 1-3 2 2z" fill="#222" />
            <path d="m17 4 2-3h2l2 2v2l-3 2z" fill="#cf6e4c" stroke="#8f4a32" strokeWidth=".7" />
          </svg>
        </button>
        <button type="button" aria-label="Reload">
          <svg width="22" height="22" viewBox="0 0 22 22">
            <path d="M21 1v10H11l3-3c-4-3-8-1-8 3 0 5 6 7 10 2l5 1c-3 8-13 10-18 4C-2 12 1 4 7 2c4-2 8-1 11 2z" fill="url(#leaf)" stroke="#1b7a2c" strokeWidth=".8" />
          </svg>
        </button>
        <span className="flex-1" />
        <FilterInput label="Filter resources" className="w-[225px]" />
      </div>
      <div className="grid min-h-0 flex-1 grid-cols-2 gap-[5px] border-b border-[#b9b9b9]">
        <ul className={`border border-[#828790] bg-white pl-6 pt-[2px] ${small}`}>
          <li>&lt;resource root&gt;</li>
        </ul>
        <div className="border border-[#828790] bg-white" />
      </div>
      <div role="tablist" className={`flex h-5 shrink-0 items-start pl-[2px] ${small}`}>
        {["Signal/Slot Editor", "Action Editor", "Resource Browser"].map((name) => (
          <button
            key={name}
            type="button"
            role="tab"
            aria-selected={tab === name}
            onClick={() => setTab(name)}
            className={`border border-t-0 border-[#d9d9d9] ${
              tab === name ? "h-5 bg-white px-[11px] pt-px" : "h-[18px] bg-[#f0f0f0] px-2"
            }`}
          >
            {name}
          </button>
        ))}
      </div>
    </section>
  );
}

export default function App() {
  return (
    <div className={`flex h-screen flex-col overflow-hidden bg-[#f0f0f0] text-black ${ui}`}>
      <Gradients />
      <TitleBar />
      <MenuBar />
      <ToolBar />
      <div className="flex min-h-0 flex-1">
        <WidgetBox />
        <main className="relative ml-1 min-w-0 flex-1 overflow-hidden border border-[#7f7f86] bg-[#a0a0a0]">
          <FormWindow />
        </main>
        <div className="ml-1 flex w-[512px] shrink-0 flex-col pt-px">
          <ObjectInspector />
          <PropertyEditor />
          <ResourceBrowser />
        </div>
      </div>
      <footer className="h-5 shrink-0 border-b-2 border-[#333]" />
    </div>
  );
}
